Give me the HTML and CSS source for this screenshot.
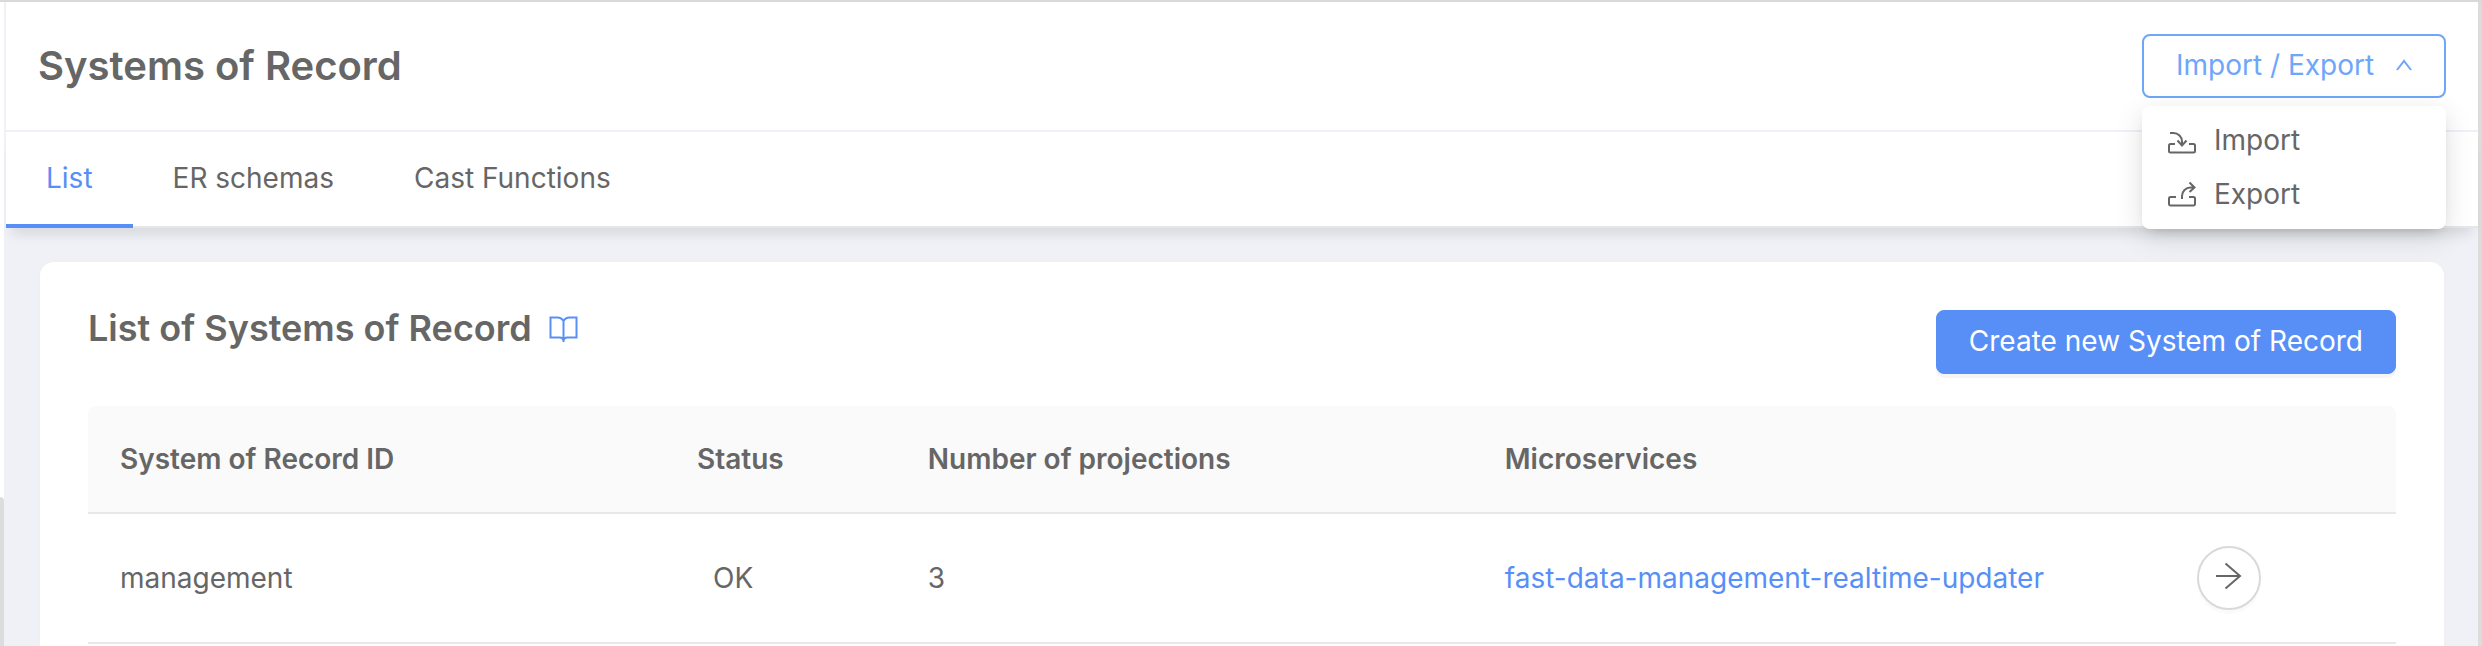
FILE: index.html
```html
<!DOCTYPE html>
<html lang="en">
<head>
<meta charset="utf-8">
<title>Systems of Record</title>
<link rel="stylesheet" href="styles.css">
</head>
<body>
<div class="shell">
  <div class="rail"><div class="rail-thumb"></div></div>
  <main class="page">
    <header class="page-header">
      <h1 class="page-title">Systems of Record</h1>
      <div class="dropdown">
        <button class="btn btn-outline" type="button" aria-haspopup="menu" aria-expanded="true">
          <span>Import / Export</span>
          <svg class="caret" viewBox="0 0 16 12" aria-hidden="true"><path d="M1 11 8 2l7 9"/></svg>
        </button>
        <div class="menu" role="menu">
          <button class="menu-item" type="button" role="menuitem">
            <svg class="menu-icon" viewBox="0 -1 32 32" aria-hidden="true"><path d="M9 19H4.500a1.500 1.500 0 0 0-1.500 1.500V26a1.500 1.500 0 0 0 1.500 1.500h23A1.500 1.500 0 0 0 29 26v-5.500a1.500 1.500 0 0 0-1.500-1.500H23M4 8h3.500a8.500 8.500 0 0 1 8.500 8.500V20M11.500 15.500 16 20.500l4.500-5"/></svg>
            <span>Import</span>
          </button>
          <button class="menu-item" type="button" role="menuitem">
            <svg class="menu-icon" viewBox="0 -1 32 32" aria-hidden="true"><path d="M10 18H4.500a1.500 1.500 0 0 0-1.500 1.500V25a1.500 1.500 0 0 0 1.500 1.500h23A1.500 1.500 0 0 0 29 25v-5.500a1.500 1.500 0 0 0-1.500-1.500H23M16 20v-3a8.500 8.500 0 0 1 8.500-8.500H28M23.500 3.500l5 5-5 4.500"/></svg>
            <span>Export</span>
          </button>
        </div>
      </div>
    </header>
    <nav class="tabs">
      <a class="tab tab-active" href="#list" aria-current="page">List</a>
      <a class="tab" href="#schemas">ER schemas</a>
      <a class="tab" href="#functions">Cast Functions</a>
    </nav>
    <section class="card">
      <div class="card-header">
        <div class="card-heading">
          <h2 class="card-title">List of Systems of Record</h2>
          <a class="docs-link" href="#docs" aria-label="Documentation">
            <svg class="book" viewBox="0 0 30 30" aria-hidden="true"><path d="M15.500 8c-1.500-2.500-3.500-3.500-6-3.500h-7V24.500h9.500c2 0 3 1 3.500 3 .5-2 1.500-3 3.500-3h9.500V4.500h-7c-2.500 0-4.500 1-6 3.500zm0 0v21"/></svg>
          </a>
        </div>
        <button class="btn btn-primary" type="button">Create new System of Record</button>
      </div>
      <table class="table">
        <colgroup><col class="w25"><col class="w10"><col class="w25"><col class="w30"><col class="w10"></colgroup>
        <thead>
          <tr><th scope="col">System of Record ID</th><th scope="col">Status</th><th scope="col">Number of projections</th><th scope="col">Microservices</th><td></td></tr>
        </thead>
        <tbody>
          <tr>
            <td>management</td>
            <td class="status">OK</td>
            <td>3</td>
            <td><a class="link" href="#service">fast-data-management-realtime-updater</a></td>
            <td>
              <button class="btn-round" type="button" aria-label="Open management">
                <svg class="arrow" viewBox="0 0 28 32" aria-hidden="true"><path d="M1 14h24M10.500 1.500 25 14 10.500 26.500"/></svg>
              </button>
            </td>
          </tr>
        </tbody>
      </table>
    </section>
  </main>
</div>
</body>
</html>
```
FILE: styles.css
```css
* { box-sizing: border-box; }

body {
  margin: 0;
  font-family: Inter, "Liberation Sans", sans-serif;
  font-size: 28px;
  line-height: 42px;
  color: #666;
  background: #fff;
}

h1, h2 { margin: 0; font-weight: 600; }
a { text-decoration: none; }
button { font: inherit; color: inherit; cursor: pointer; }

svg {
  display: block;
  fill: none;
  stroke: currentColor;
  stroke-width: 2;
}

.shell {
  display: flex;
  min-height: 100vh;
  border-top: 2px solid #d9d9d9;
}

.rail {
  display: flex;
  flex: none;
  align-items: flex-end;
  width: 4px;
}

.rail-thumb {
  width: 4px;
  height: 23vh;
  border-radius: 0 4px 0 0;
  background: #dcdcdc;
}

.page {
  display: flex;
  flex: 1;
  flex-direction: column;
  border-left: 2px solid #eff1f6;
  border-right: 4px solid #dcdcdc;
  background: #eff1f6;
}

.page-header {
  display: flex;
  align-items: center;
  justify-content: space-between;
  height: 130px;
  padding: 0 32px;
  border-bottom: 2px solid #eff1f6;
  background: #fff;
}

.page-title { font-size: 40px; line-height: 48px; }

.btn {
  display: flex;
  align-items: center;
  justify-content: space-between;
  height: 64px;
  padding: 0 32px 2px;
  border: 2px solid;
  border-radius: 8px;
  white-space: nowrap;
}

.btn-outline {
  width: 304px;
  border-color: #6ea6f9;
  color: #6ea6f9;
  background: #fff;
}

.btn-primary {
  border-width: 1px;
  border-color: #588ff7;
  color: #fff;
  background: #588ff7;
  box-shadow: 0 4px 0 rgba(0, 0, 0, .04);
}

.caret { width: 16px; height: 12px; }

.dropdown { position: relative; }

.menu {
  position: absolute;
  z-index: 2;
  top: 100%;
  left: 0;
  width: 100%;
  margin-top: 8px;
  padding: 7px 0 8px;
  border-radius: 8px;
  background: #fff;
  box-shadow: 0 6px 12px -8px rgba(0, 0, 0, .24), 0 8px 28px rgba(0, 0, 0, .13);
}

.menu-item {
  display: flex;
  align-items: center;
  gap: 16px;
  width: 100%;
  height: 54px;
  padding: 0 24px;
  border: 0;
  background: none;
}

.menu-icon { width: 32px; height: 32px; }

.tabs {
  display: flex;
  height: 96px;
  border-bottom: 2px solid #e6e6e8;
  background: #fff;
  box-shadow: 0 12px 12px -6px rgba(0, 0, 0, .1);
}

.tab {
  display: flex;
  align-items: center;
  height: 96px;
  padding: 0 40px;
  border-bottom: 4px solid transparent;
  color: #666;
}

.tab-active { border-color: #588ff7; color: #588ff7; }

.card {
  flex: 1;
  margin: 32px 32px 0;
  padding: 48px 48px 0;
  border: 2px solid #f0f0f0;
  border-bottom: 0;
  border-radius: 16px 16px 0 0;
  background: #fff;
}

.card-header {
  display: flex;
  align-items: flex-start;
  justify-content: space-between;
  margin-bottom: 32px;
}

.card-heading { display: flex; align-items: center; gap: 16px; }
.card-title { font-size: 36px; line-height: 36px; }
.docs-link { color: #588ff7; }
.book { width: 30px; height: 30px; }

.table {
  width: 100%;
  table-layout: fixed;
  border-collapse: separate;
  border-spacing: 0;
}

.w10 { width: 10%; }
.w25 { width: 25%; }
.w30 { width: 30%; }

.table th, .table td {
  padding: 32px;
  border-bottom: 2px solid #e8e8e8;
  text-align: left;
  white-space: nowrap;
}

.table thead > tr > * {
  font-weight: 600;
  background: #fafafa;
}

.table thead > tr > :first-child { border-top-left-radius: 8px; }
.table thead > tr > :last-child { border-top-right-radius: 8px; }
.table .status { padding-left: 48px; }
.link { color: #588ff7; }

.btn-round {
  display: grid;
  place-items: center;
  width: 64px;
  height: 64px;
  padding: 0;
  border: 2px solid #d9d9d9;
  border-radius: 50%;
  background: #fff;
  box-shadow: 0 4px 0 rgba(0, 0, 0, .02);
}

.arrow { width: 28px; height: 32px; }
```
